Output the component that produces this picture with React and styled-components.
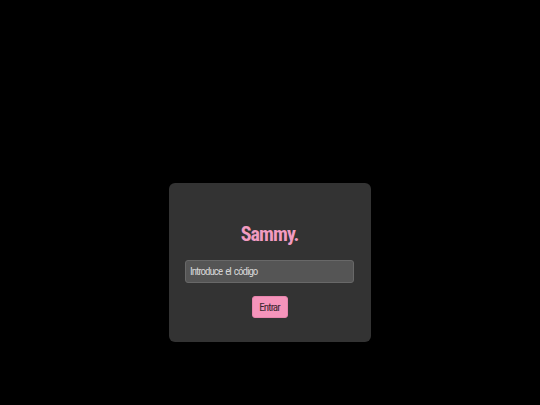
import React from 'react';
import styled, { createGlobalStyle } from 'styled-components';

const Global = createGlobalStyle`
  html, body {
    margin: 0;
    background: #000;
  }
  body {
    font-family: "Roboto Condensed", "Liberation Sans", sans-serif;
  }
`;

const Page = styled.main`
  min-height: 405px;
  display: flex;
  justify-content: center;
  align-items: flex-start;
  padding-top: 183px;
  box-sizing: border-box;
`;

const Card = styled.form`
  width: 202px;
  height: 159px;
  box-sizing: border-box;
  padding: 39px 17px 0 16px;
  background: #333;
  border-radius: 6px;
  display: flex;
  flex-direction: column;
  align-items: center;
`;

const Title = styled.h1`
  margin: 0;
  font-size: 20px;
  line-height: 24px;
  font-weight: 700;
  letter-spacing: -0.9px;
  color: #f29bc1;
`;

const CodeInput = styled.input`
  margin-top: 14px;
  width: 100%;
  height: 23px;
  box-sizing: border-box;
  padding: 0 4px;
  background: #555;
  border: 1px solid #686868;
  border-radius: 3px;
  color: #eee;
  font-family: inherit;
  font-size: 11px;
  letter-spacing: -1px;
  word-spacing: 1.5px;
  outline: none;

  &::placeholder {
    color: #d4d4d4;
    letter-spacing: -1px;
    word-spacing: 1.5px;
  }
`;

const Button = styled.button`
  margin-top: 13px;
  width: 36px;
  height: 22px;
  padding: 0;
  background: #f594bb;
  border: 1px solid #e685ad;
  border-radius: 3px;
  color: #3a2630;
  font-family: inherit;
  font-size: 11px;
  letter-spacing: -0.9px;
  cursor: pointer;
`;

export default function App() {
  return (
    <>
      <Global />
      <Page>
        <Card onSubmit={(e) => e.preventDefault()}>
          <Title>Sammy.</Title>
          <CodeInput type="text" placeholder="Introduce el código" />
          <Button type="submit">Entrar</Button>
        </Card>
      </Page>
    </>
  );
}
